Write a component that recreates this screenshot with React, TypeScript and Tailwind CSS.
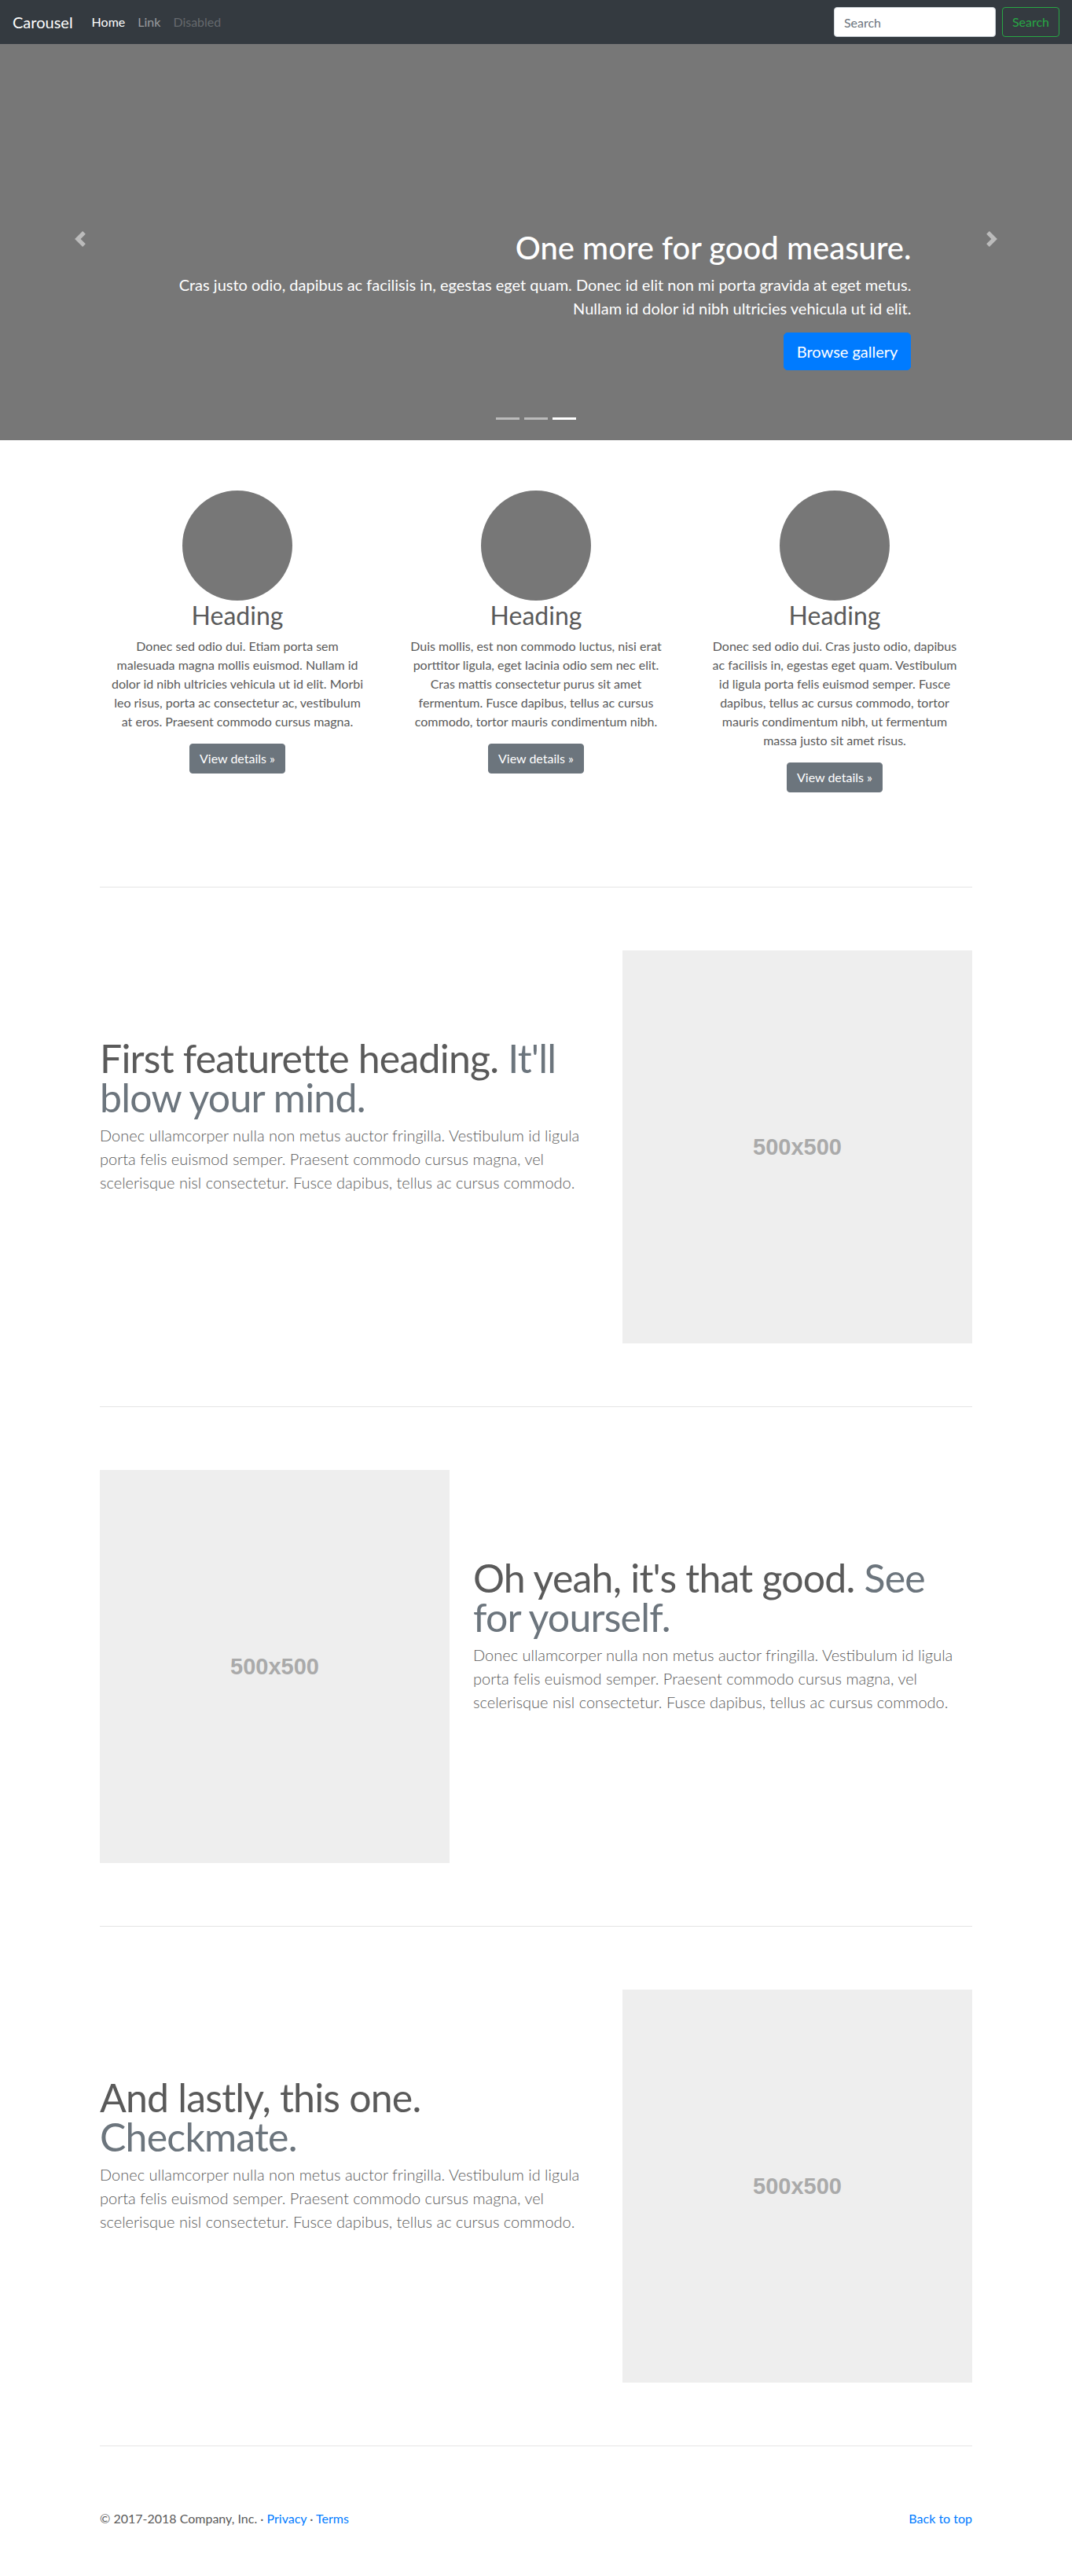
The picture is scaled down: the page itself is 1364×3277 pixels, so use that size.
import React from "react";

const cols = [
  [
    "Donec sed odio dui. Etiam porta sem",
    "malesuada magna mollis euismod. Nullam id",
    "dolor id nibh ultricies vehicula ut id elit. Morbi",
    "leo risus, porta ac consectetur ac, vestibulum",
    "at eros. Praesent commodo cursus magna.",
  ],
  [
    "Duis mollis, est non commodo luctus, nisi erat",
    "porttitor ligula, eget lacinia odio sem nec elit.",
    "Cras mattis consectetur purus sit amet",
    "fermentum. Fusce dapibus, tellus ac cursus",
    "commodo, tortor mauris condimentum nibh.",
  ],
  [
    "Donec sed odio dui. Cras justo odio, dapibus",
    "ac facilisis in, egestas eget quam. Vestibulum",
    "id ligula porta felis euismod semper. Fusce",
    "dapibus, tellus ac cursus commodo, tortor",
    "mauris condimentum nibh, ut fermentum",
    "massa justo sit amet risus.",
  ],
];

const leads = [
  [
    "Donec ullamcorper nulla non metus auctor fringilla. Vestibulum id ligula",
    "porta felis euismod semper. Praesent commodo cursus magna, vel",
    "scelerisque nisl consectetur. Fusce dapibus, tellus ac cursus commodo.",
  ],
];

function Placeholder() {
  return (
    <div className="w-[445px] h-[500px] bg-[#eeeeee] flex items-center justify-center mx-auto">
      <span className="font-['Liberation_Sans',Arial,sans-serif] font-bold text-[29px] text-[#aaaaaa]">
        500x500
      </span>
    </div>
  );
}

function Lead() {
  return (
    <p className="text-[20px] font-light leading-[30px] text-[#5a5a5a]">
      {leads[0].map((l) => (
        <span key={l} className="block whitespace-nowrap">
          {l}
        </span>
      ))}
    </p>
  );
}

function Heading({ a, b, c }: { a: string; b: string; c?: string }) {
  return (
    <h2 className="mt-[112px] mb-2 text-[50px] font-normal leading-none tracking-[-0.05rem] text-[#5a5a5a]">
      <span className="block whitespace-nowrap">
        {a}
        {c ? <span className="text-[#6c757d]">{c}</span> : null}
      </span>
      <span className="block whitespace-nowrap text-[#6c757d]">{b}</span>
    </h2>
  );
}

function Divider() {
  return (
    <div className="w-[1140px] mx-auto px-[15px]">
      <hr className="my-20 border-0 border-t border-black/10" />
    </div>
  );
}

function Chevron({ right }: { right?: boolean }) {
  return (
    <svg width="20" height="20" viewBox="0 0 8 8" fill="#fff">
      {right ? (
        <path d="M2.75 0l-1.5 1.5 2.5 2.5-2.5 2.5 1.5 1.5 4-4-4-4z" />
      ) : (
        <path d="M5.25 0l-4 4 4 4 1.5-1.5-2.5-2.5 2.5-2.5-1.5-1.5z" />
      )}
    </svg>
  );
}

export default function App() {
  return (
    <div className="font-[Lato,sans-serif] text-[#5a5a5a] text-base leading-6 pt-12 pb-12 bg-white">
      {/* Navbar */}
      <nav className="fixed top-0 inset-x-0 z-30 h-14 bg-[#343a40] px-4 flex items-center">
        <span className="text-[20px] text-white mr-4 leading-[30px]">Carousel</span>
        <div className="flex items-center">
          <span className="px-2 text-white">Home</span>
          <span className="px-2 text-white/50">Link</span>
          <span className="px-2 text-white/25">Disabled</span>
        </div>
        <div className="ml-auto flex items-center">
          <input
            className="w-[206px] h-[38px] px-3 rounded border border-[#ced4da] bg-white text-base text-[#495057] placeholder:text-[#6c757d] mr-2 outline-none"
            placeholder="Search"
          />
          <button className="h-[38px] px-3 rounded border border-[#28a745] text-[#28a745] text-base">
            Search
          </button>
        </div>
      </nav>

      {/* Carousel */}
      <div className="relative h-[512px] bg-[#777777] mb-16 overflow-hidden">
        <div className="absolute left-0 top-0 bottom-0 w-[15%] flex items-center justify-center opacity-50">
          <Chevron />
        </div>
        <div className="absolute right-0 top-0 bottom-0 w-[15%] flex items-center justify-center opacity-50">
          <Chevron right />
        </div>
        <div className="absolute left-[15%] right-[15%] bottom-[53px] py-5 text-right text-white z-10">
          <h1 className="text-[40px] font-medium leading-[1.2] mb-2">One more for good measure.</h1>
          <p className="text-[20px] font-normal leading-[30px] mb-4">
            <span className="block whitespace-nowrap">
              Cras justo odio, dapibus ac facilisis in, egestas eget quam. Donec id elit non mi porta gravida at eget metus.
            </span>
            <span className="block whitespace-nowrap">Nullam id dolor id nibh ultricies vehicula ut id elit.</span>
          </p>
          <div className="flex justify-end mb-4">
            <span className="inline-block bg-[#007bff] text-white text-[20px] leading-[30px] px-4 py-2 rounded-[5px] border border-[#007bff]">
              Browse gallery
            </span>
          </div>
        </div>
        <div className="absolute bottom-[26px] left-0 right-0 flex justify-center z-20">
          <span className="w-[30px] h-[3px] mx-[3px] bg-white/50" />
          <span className="w-[30px] h-[3px] mx-[3px] bg-white/50" />
          <span className="w-[30px] h-[3px] mx-[3px] bg-white" />
        </div>
      </div>

      {/* Marketing */}
      <div className="w-[1140px] mx-auto grid grid-cols-3">
        {cols.map((lines, i) => (
          <div key={i} className="px-[15px] text-center mb-6">
            <div className="w-[140px] h-[140px] rounded-full bg-[#777777] mx-auto" />
            <h2 className="text-[32px] font-normal leading-[38px] mb-2">Heading</h2>
            <p className="mb-4">
              {lines.map((l) => (
                <span key={l} className="block whitespace-nowrap">
                  {l}
                </span>
              ))}
            </p>
            <div className="flex justify-center mb-4">
              <span className="inline-block bg-[#6c757d] text-white px-3 py-[6px] leading-6 rounded border border-[#6c757d]">
                View details »
              </span>
            </div>
          </div>
        ))}
      </div>

      <Divider />

      <div className="w-[1140px] mx-auto grid grid-cols-12">
        <div className="col-span-7 px-[15px]">
          <Heading a="First featurette heading. " c="It'll" b="blow your mind." />
          <Lead />
        </div>
        <div className="col-span-5 px-[15px]">
          <Placeholder />
        </div>
      </div>

      <Divider />

      <div className="w-[1140px] mx-auto grid grid-cols-12">
        <div className="col-span-5 px-[15px]">
          <Placeholder />
        </div>
        <div className="col-span-7 px-[15px]">
          <Heading a="Oh yeah, it's that good. " c="See" b="for yourself." />
          <Lead />
        </div>
      </div>

      <Divider />

      <div className="w-[1140px] mx-auto grid grid-cols-12">
        <div className="col-span-7 px-[15px]">
          <Heading a="And lastly, this one." b="Checkmate." />
          <Lead />
        </div>
        <div className="col-span-5 px-[15px]">
          <Placeholder />
        </div>
      </div>

      <Divider />

      <footer className="w-[1140px] mx-auto px-[15px] flex justify-between mb-4">
        <p>
          © 2017-2018 Company, Inc. · <a className="text-[#007bff]">Privacy</a> ·{" "}
          <a className="text-[#007bff]">Terms</a>
        </p>
        <p>
          <a className="text-[#007bff]">Back to top</a>
        </p>
      </footer>
    </div>
  );
}
